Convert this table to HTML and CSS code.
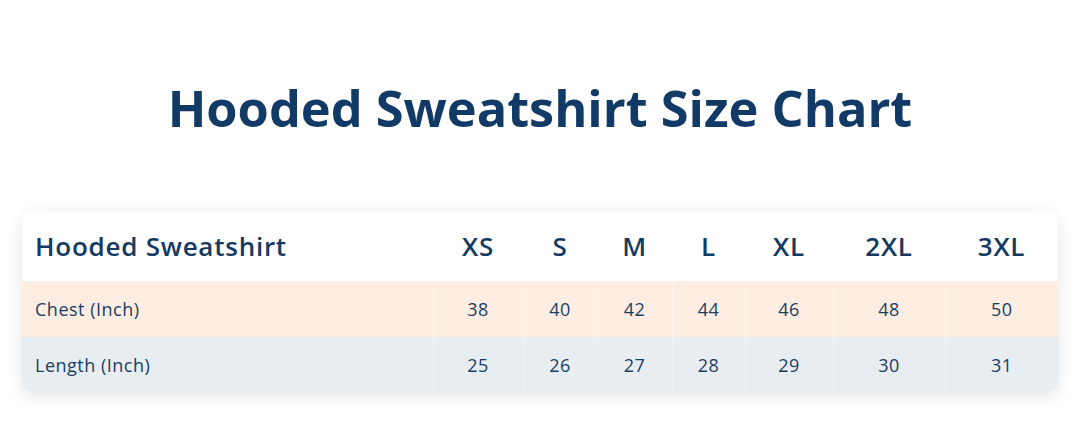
FILE: index.html
```html
<!DOCTYPE html>
<html>
<head>
<meta charset="utf-8">
<link rel="stylesheet" href="styles.css">
</head>
<body>
<div class="page">
  <h1 class="title">Hooded Sweatshirt Size Chart</h1>
  <div class="card">
    <table class="chart">
      <colgroup>
        <col class="c-label">
        <col class="c-xs">
        <col class="c-s">
        <col class="c-m">
        <col class="c-l">
        <col class="c-xl">
        <col class="c-2xl">
        <col class="c-3xl">
      </colgroup>
      <thead>
        <tr class="head">
          <th class="label">Hooded Sweatshirt</th>
          <th>XS</th><th>S</th><th>M</th><th>L</th><th>XL</th><th>2XL</th><th>3XL</th>
        </tr>
      </thead>
      <tbody>
        <tr class="row chest">
          <td class="label">Chest (Inch)</td>
          <td>38</td><td>40</td><td>42</td><td>44</td><td>46</td><td>48</td><td>50</td>
        </tr>
        <tr class="row length">
          <td class="label">Length (Inch)</td>
          <td>25</td><td>26</td><td>27</td><td>28</td><td>29</td><td>30</td><td>31</td>
        </tr>
      </tbody>
    </table>
  </div>
</div>
</body>
</html>
```
FILE: styles.css
```css
* { box-sizing: border-box; }
html, body { margin: 0; padding: 0; background: #ffffff; }
body {
  font-family: "Open Sans", "Noto Sans", sans-serif;
  color: #133a63;
}
.page {
  width: 1080px;
  height: 442px;
  padding: 73px 22px 0 22px;
}
.title {
  margin: 0;
  text-align: center;
  font-size: 50.5px;
  font-weight: 700;
  line-height: 70px;
  color: #113a66;
  letter-spacing: 0;
}
.card {
  margin-top: 68px;
  width: 1036px;
  border-radius: 10px;
  overflow: hidden;
  background: #ffffff;
  box-shadow: 0 4px 18px rgba(0, 0, 0, 0.10);
}
.chart {
  width: 100%;
  border-collapse: collapse;
  table-layout: fixed;
}
.c-label { width: 411px; }
.c-xs { width: 90px; }
.c-s { width: 74px; }
.c-m { width: 75px; }
.c-l { width: 73px; }
.c-xl { width: 88px; }
.c-2xl { width: 112px; }
.c-3xl { width: 113px; }
th, td {
  padding: 0;
  text-align: center;
}
.head th {
  height: 70px;
  font-size: 26px;
  font-weight: 600;
  color: #133a63;
  letter-spacing: 0.75px;
}
.head th.label {
  text-align: left;
  padding-left: 13px;
}
.row td {
  font-size: 18px;
  font-weight: 400;
  color: #1a3d63;
  letter-spacing: 0.5px;
  border-left: 1px solid rgba(255, 255, 255, 0.35);
}
.row td.label {
  text-align: left;
  padding-left: 13px;
  border-left: none;
}
.chest td { height: 56px; background: #feede3; }
.length td { height: 55px; background: #e8edf2; }
```
